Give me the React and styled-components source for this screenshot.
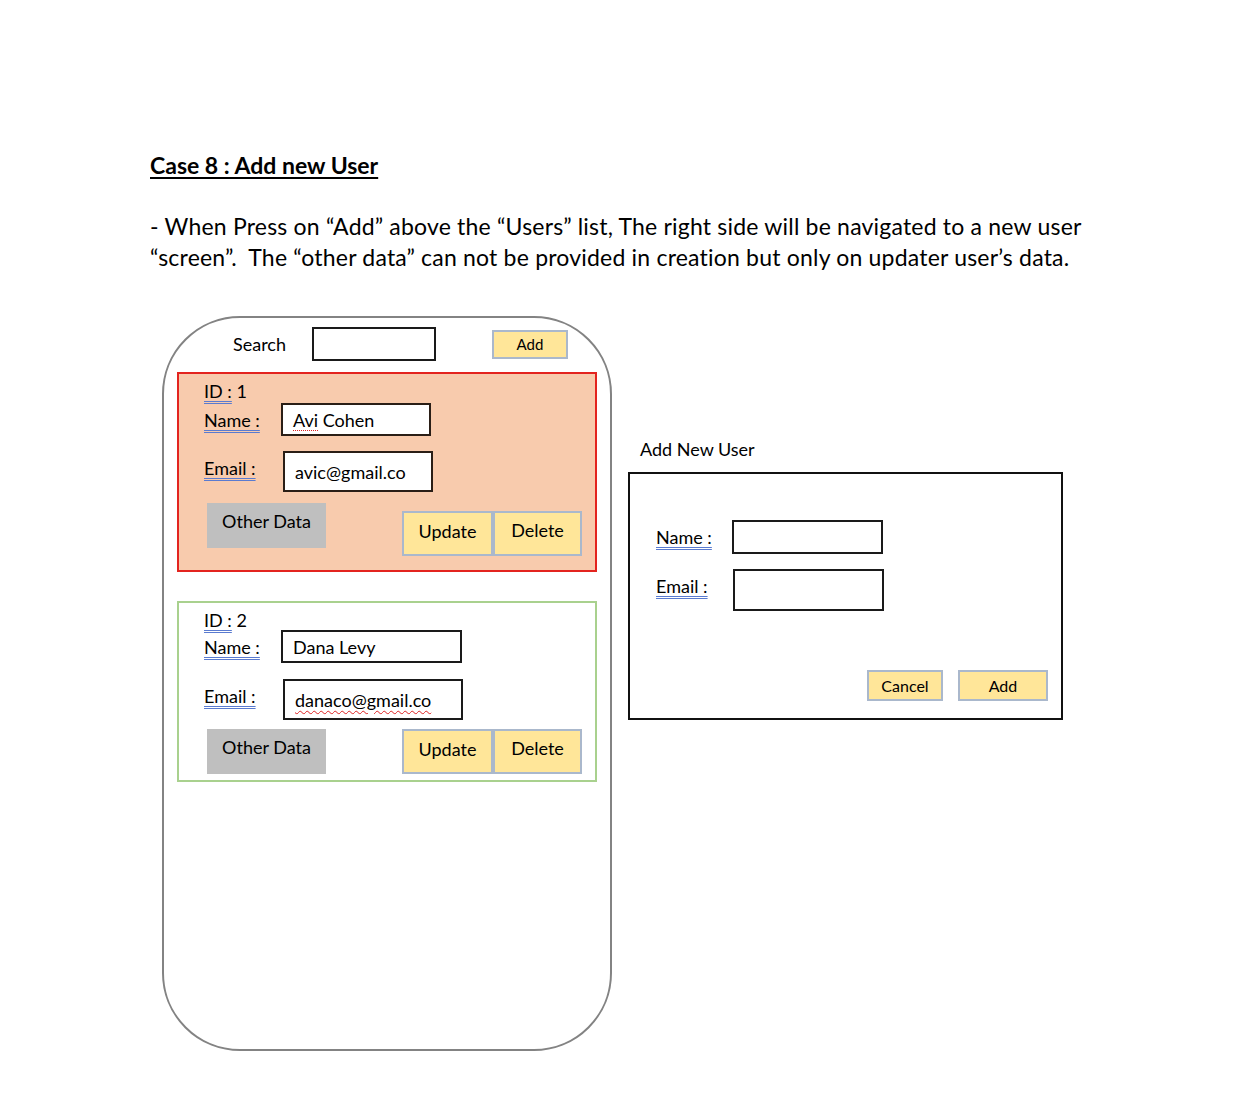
import React from 'react';
import styled, {createGlobalStyle, css} from 'styled-components';

const GlobalStyle = createGlobalStyle`
  body {
    margin: 0;
    background: #fff;
    color: #000;
    font-family: Lato, "Open Sans", sans-serif;
  }
`;

const users = [
  {id: 1, name: 'Avi Cohen', email: 'avic@gmail.co', selected: true, nameWidth: 150, emailWidth: 150},
  {id: 2, name: 'Dana Levy', email: 'danaco@gmail.co', selected: false, nameWidth: 181, emailWidth: 180},
];

const Page = styled.div`
  padding: 150px 0 0 150px;
`;

const Heading = styled.h1`
  margin: 0;
  font-size: 23px;
  line-height: 30px;
  font-weight: 700;
  text-decoration: underline;
  text-underline-offset: 3px;
  text-decoration-thickness: 2px;
`;

const Description = styled.p`
  margin: 31px 0 0;
  font-size: 23px;
  letter-spacing: 0.2px;
  line-height: 31px;
  white-space: nowrap;
`;

const Board = styled.div`
  display: flex;
  align-items: flex-start;
  margin: 43px 0 0 12px;
`;

const Phone = styled.div`
  box-sizing: border-box;
  width: 450px;
  height: 735px;
  border: 2px solid #838383;
  border-radius: 78px;
  padding: 9px 13px;
  display: flex;
  flex-direction: column;
`;

const Toolbar = styled.div`
  display: flex;
  align-items: center;
  padding-left: 56px;
  margin-bottom: 11px;
`;

const SearchLabel = styled.span`
  font-size: 18px;
  width: 79px;
`;

const Box = styled.div`
  box-sizing: border-box;
  width: ${p => p.$w}px;
  height: ${p => p.$h}px;
  border: 2px solid ${p => p.$dark ? '#2a1e16' : '#1a1a1a'};
  background: #fff;
  padding-left: 10px;
  display: flex;
  align-items: center;
  font-size: 18px;
  white-space: nowrap;
`;

const Squiggle = styled.span`
  text-decoration: underline ${p => p.$wavy ? 'wavy' : 'dotted'} #d22;
  text-decoration-thickness: 1px;
  text-underline-offset: 3px;
`;

const YellowButton = styled.div`
  box-sizing: border-box;
  width: ${p => p.$w}px;
  height: ${p => p.$h}px;
  background: #ffe699;
  border: 2px solid #aab8cc;
  display: flex;
  align-items: center;
  justify-content: center;
  padding-bottom: ${p => p.$lift || 0}px;
  font-size: ${p => p.$size || 18}px;
`;

const UserList = styled.div`
  display: flex;
  flex-direction: column;
  gap: 29px;
`;

const Card = styled.div`
  box-sizing: border-box;
  width: 420px;
  border: 2px solid #a9d18e;
  background: #fff;
  padding: 7px 13px ${p => p.$pad}px 25px;
  ${p => p.$selected && css`
    border-color: #e3241f;
    background: #f8cbad;
  `}
`;

const Underlined = styled.span`
  text-decoration: underline double #5a7bd0;
  text-decoration-thickness: 1px;
  text-underline-offset: 3px;
`;

const IdLine = styled.div`
  font-size: 18px;
  line-height: 20px;
  height: 20px;
`;

const FieldRow = styled.div`
  display: flex;
  align-items: center;
  margin-top: ${p => p.$top}px;
`;

const FieldLabel = styled.span`
  width: ${p => p.$w || 77}px;
  font-size: 18px;
  margin-top: ${p => p.$raise ? -p.$raise : 0}px;
`;

const CardFooter = styled.div`
  display: flex;
  align-items: flex-start;
  margin-top: ${p => p.$top}px;
  padding-left: 3px;
`;

const OtherData = styled.div`
  width: 119px;
  height: 45px;
  box-sizing: border-box;
  background: #bfbfbf;
  padding-top: 7px;
  text-align: center;
  font-size: 18px;
`;

const Actions = styled.div`
  display: flex;
  margin-left: auto;
  margin-top: ${p => p.$offset}px;
`;

const AddColumn = styled.div`
  margin-left: 16px;
  padding-top: 121px;
`;

const PanelTitle = styled.div`
  padding-left: 12px;
  font-size: 18px;
  line-height: 24px;
  margin-bottom: 11px;
`;

const FormPanel = styled.div`
  box-sizing: border-box;
  width: 435px;
  height: 248px;
  border: 2px solid #111;
  padding: 46px 13px 17px 26px;
  display: flex;
  flex-direction: column;
`;

const PanelActions = styled.div`
  display: flex;
  justify-content: flex-end;
  gap: 15px;
  margin-top: auto;
`;

const UserCard = ({user}) => {
  const first = user.selected;
  const [firstName, ...rest] = user.name.split(' ');
  return (
    <Card $selected={first} $pad={first ? 14 : 6}>
      <IdLine><Underlined>ID :</Underlined> {user.id}</IdLine>
      <FieldRow $top={first ? 2 : 0}>
        <FieldLabel><Underlined>Name :</Underlined></FieldLabel>
        <Box $w={user.nameWidth} $h={33} $dark={first}>
          {first ? <><Squiggle>{firstName}</Squiggle>&nbsp;{rest.join(' ')}</> : user.name}
        </Box>
      </FieldRow>
      <FieldRow $top={first ? 15 : 16}>
        <FieldLabel $w={79} $raise={7}><Underlined>Email :</Underlined></FieldLabel>
        <Box $w={user.emailWidth} $h={41} $dark={first}>
          {first ? user.email : <Squiggle $wavy>{user.email}</Squiggle>}
        </Box>
      </FieldRow>
      <CardFooter $top={first ? 11 : 9}>
        <OtherData>Other Data</OtherData>
        <Actions $offset={first ? 8 : 0}>
          <YellowButton $w={91} $h={45} $lift={5}>Update</YellowButton>
          <YellowButton $w={89} $h={45} $lift={7}>Delete</YellowButton>
        </Actions>
      </CardFooter>
    </Card>
  );
};

export default function App() {
  return (
    <>
      <GlobalStyle />
      <Page>
        <Heading>Case 8 : Add new User</Heading>
        <Description>
          - When Press on “Add” above the “Users” list, The right side will be navigated to a new user<br />
          “screen”.&nbsp; The “other data” can not be provided in creation but only on updater user’s data.
        </Description>
        <Board>
          <Phone>
            <Toolbar>
              <SearchLabel>Search</SearchLabel>
              <Box $w={124} $h={34} />
              <YellowButton $w={76} $h={29} $size={15} style={{marginLeft: 56}}>Add</YellowButton>
            </Toolbar>
            <UserList>
              {users.map(user => <UserCard key={user.id} user={user} />)}
            </UserList>
          </Phone>
          <AddColumn>
            <PanelTitle>Add New User</PanelTitle>
            <FormPanel>
              <FieldRow $top={0}>
                <FieldLabel $w={76}><Underlined>Name :</Underlined></FieldLabel>
                <Box $w={151} $h={34} />
              </FieldRow>
              <FieldRow $top={15}>
                <FieldLabel $w={77} $raise={8}><Underlined>Email :</Underlined></FieldLabel>
                <Box $w={151} $h={42} />
              </FieldRow>
              <PanelActions>
                <YellowButton $w={76} $h={31} $size={16}>Cancel</YellowButton>
                <YellowButton $w={90} $h={31} $size={16}>Add</YellowButton>
              </PanelActions>
            </FormPanel>
          </AddColumn>
        </Board>
      </Page>
    </>
  );
}
